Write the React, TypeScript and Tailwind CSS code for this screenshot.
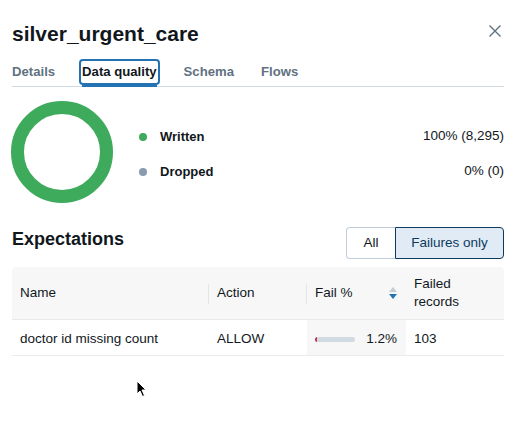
import React from "react";

const tabs = ["Details", "Data quality", "Schema", "Flows"];

const Legend: React.FC<{ color: string; label: string; value: string }> = ({ color, label, value }) => (
  <div className="flex items-center h-[18px]">
    <span className={`w-2 h-2 rounded-full ${color}`}></span>
    <span className="ml-[13px] text-[13px] font-bold">{label}</span>
    <span className="ml-auto text-[13.5px]">{value}</span>
  </div>
);

export default function App() {
  return (
    <div className="relative w-[512px] h-[448px] overflow-hidden bg-white pl-3 pr-2 font-['Liberation_Sans',Arial,sans-serif] text-[#11171c]">
      {/* Header */}
      <div className="flex items-start justify-between pt-5">
        <h1 className="text-[21px] font-bold leading-[28px]">silver_urgent_care</h1>
        <button className="mt-[5px] mr-[3px] text-[#5f7281]">
          <svg width="12" height="12" viewBox="0 0 12 12" fill="none" stroke="currentColor" strokeWidth="1.4">
            <path d="M0.5 0.5L11.5 11.5M11.5 0.5L0.5 11.5" />
          </svg>
        </button>
      </div>

      {/* Tabs */}
      <div className="mt-4 flex gap-[27px] border-b border-[#d1d9e1]">
        {tabs.map((t) => {
          const active = t === "Data quality";
          return (
            <div
              key={t}
              className={`relative -mb-px pb-[5px] border-b-2 text-[13.15px] font-bold leading-4 ${
                active ? "border-[#2272b4] text-[#11171c]" : "border-transparent text-[#5f7281]"
              }`}
            >
              {t}
              {active && (
                <span className="absolute -left-[3px] -right-[3px] -top-[5px] bottom-0 rounded-[4px] border-2 border-[#2272b4]"></span>
              )}
            </div>
          );
        })}
      </div>

      {/* Donut + legend */}
      <div className="mt-[14px] flex items-center">
        <svg width="102" height="102" viewBox="0 0 102 102" className="-ml-px shrink-0">
          <circle cx="51" cy="51" r="44.5" fill="none" stroke="#3daa5c" strokeWidth="13" />
        </svg>
        <div className="ml-[26px] flex-1 flex flex-col gap-[17px] pt-[4px]">
          <Legend color="bg-[#3daa5c]" label="Written" value="100% (8,295)" />
          <Legend color="bg-[#8a9bb0]" label="Dropped" value="0% (0)" />
        </div>
      </div>

      {/* Expectations */}
      <div className="mt-6 flex items-start justify-between">
        <h2 className="text-[18px] font-bold leading-6">Expectations</h2>
        <div className="flex h-8 text-[13.5px]">
          <button className="w-[49px] rounded-l-[4px] border border-r-0 border-[#c0cdd8] bg-white">All</button>
          <button className="w-[109px] rounded-r-[4px] border border-[#0e3a5e] bg-[#e0ebf5] text-[#0e3a5e]">
            Failures only
          </button>
        </div>
      </div>

      {/* Table */}
      <div className="mt-2 text-[13.5px]">
        <div className="grid grid-cols-[197px_98px_99px_98px] h-[53px] rounded-t-[4px] border-b border-[#e8ebee] bg-[#f7f7f7]">
          <div className="flex items-center justify-between pl-2 pt-px">
            <span>Name</span>
            <span className="w-px h-5 bg-[#e2e6ea]"></span>
          </div>
          <div className="flex items-center justify-between pl-2 pt-px">
            <span>Action</span>
            <span className="w-px h-5 bg-[#e2e6ea]"></span>
          </div>
          <div className="flex items-center justify-between pl-2 pr-[9px] pt-px">
            <span>Fail %</span>
            <svg width="8" height="13" viewBox="0 0 8 13">
              <path d="M4 0L8 5H0Z" fill="#c4ccd4" />
              <path d="M0 7H8L4 12Z" fill="#2272b4" />
            </svg>
          </div>
          <div className="flex items-center pl-2 leading-[18px]">
            <span>
              Failed
              <br />
              records
            </span>
          </div>
        </div>
        <div className="grid grid-cols-[197px_98px_99px_98px] h-9 border-b border-[#e8ebee]">
          <div className="flex items-center pl-2 pt-1">doctor id missing count</div>
          <div className="flex items-center pl-2 pt-1">ALLOW</div>
          <div className="flex items-center justify-between bg-[#f7f7f7] pl-2 pr-[9px] pt-1">
            <span className="relative w-10 h-[5px] overflow-hidden rounded-full bg-[#d1d9e1]">
              <span className="absolute left-0 top-0 h-full w-[2px] bg-[#c82d4c]"></span>
            </span>
            <span>1.2%</span>
          </div>
          <div className="flex items-center pl-2 pt-1">103</div>
        </div>
      </div>

      {/* Mouse pointer */}
      <svg className="absolute left-[136px] top-[380px]" width="12" height="18" viewBox="0 0 12 18">
        <path d="M1 1V14L4 11L6.5 16.5L8.5 15.5L6 10H10Z" fill="#000" stroke="#fff" strokeWidth="1" />
      </svg>
    </div>
  );
}
